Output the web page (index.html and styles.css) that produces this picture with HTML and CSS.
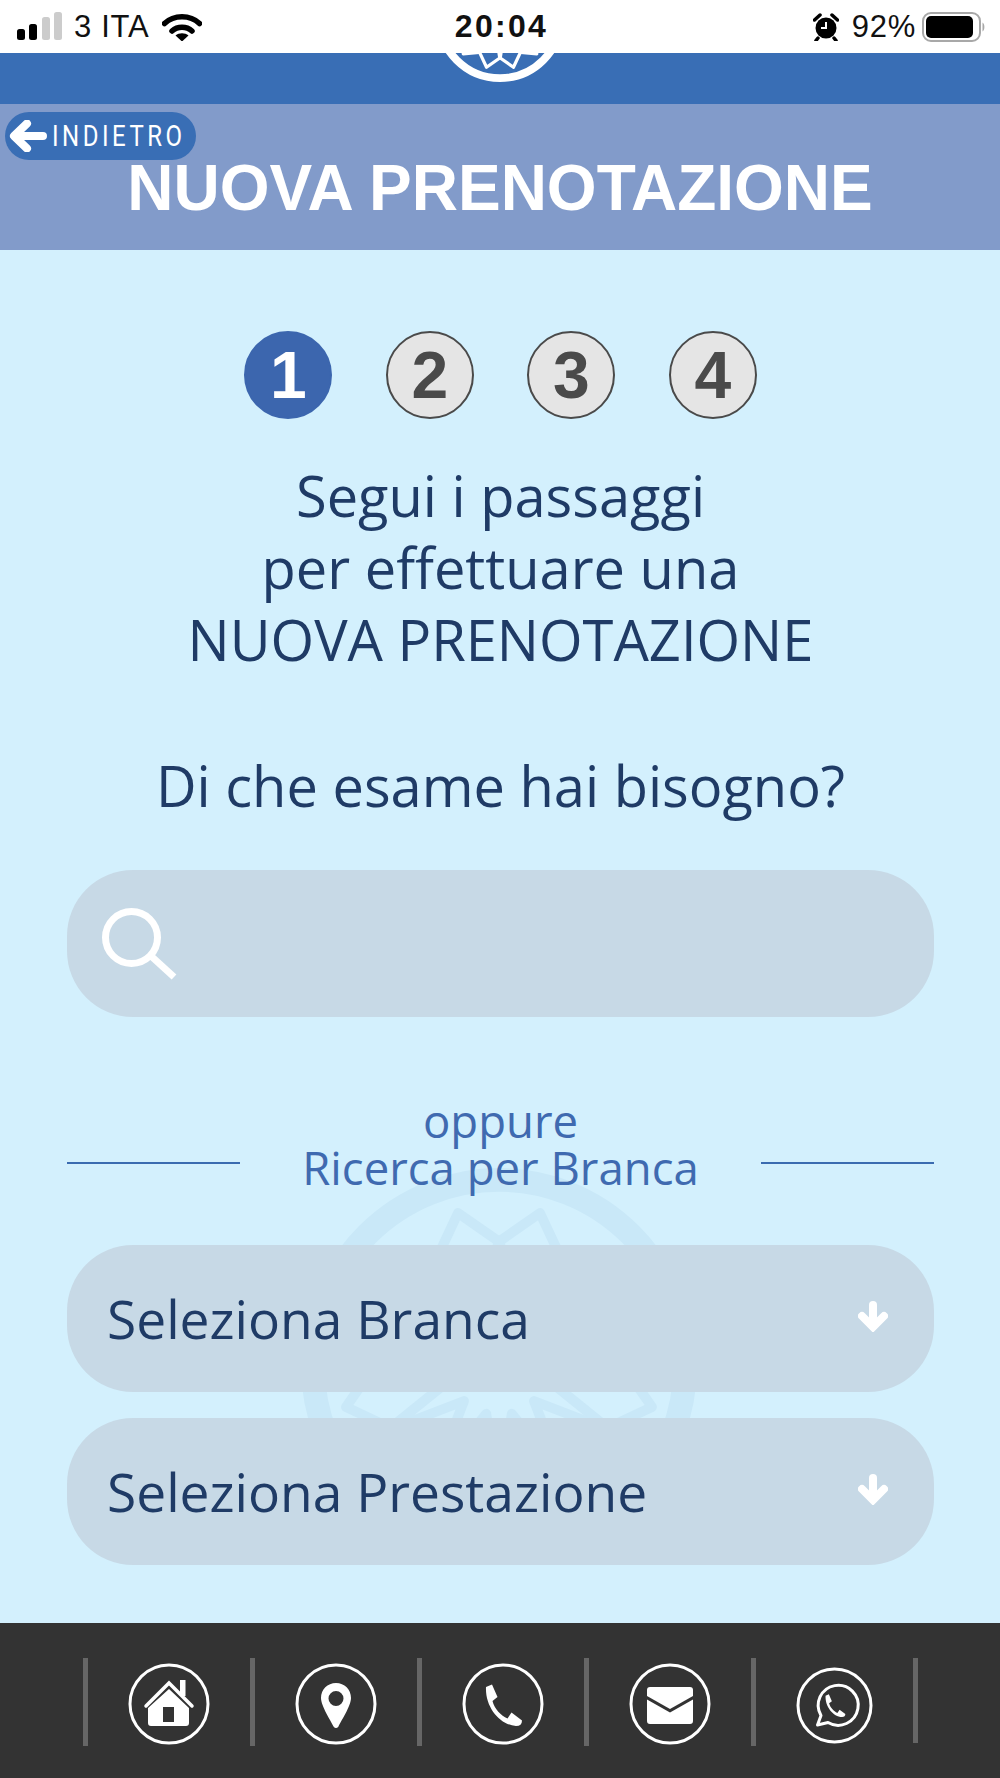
FILE: index.html
```html
<!DOCTYPE html>
<html lang="it">
<head>
<meta charset="utf-8">
<title>Nuova prenotazione</title>
<link rel="stylesheet" href="styles.css">
</head>
<body>
<svg class="defs" width="0" height="0" aria-hidden="true">
  <defs>
    <polygon id="petal" points="0,-160 32,-122 0,-50 -32,-122"/>
    <path id="handset" d="M1 3L7 0.500L12.500 13L7.500 17C9.500 25 16 31.500 22.500 34.500L26.500 28.500L37 36.500Q37 42 31 42C15 41 0 23 1 3Z"/>
    <symbol id="logo" viewBox="-200 -200 400 400">
      <circle r="188" fill="none" stroke="currentColor" stroke-width="24"/>
      <g fill="none" stroke="currentColor" stroke-width="10" stroke-linejoin="round">
        <use href="#petal" transform="rotate(15)"/>
        <use href="#petal" transform="rotate(45)"/>
        <use href="#petal" transform="rotate(75)"/>
        <use href="#petal" transform="rotate(105)"/>
        <use href="#petal" transform="rotate(135)"/>
        <use href="#petal" transform="rotate(165)"/>
        <use href="#petal" transform="rotate(195)"/>
        <use href="#petal" transform="rotate(225)"/>
        <use href="#petal" transform="rotate(255)"/>
        <use href="#petal" transform="rotate(285)"/>
        <use href="#petal" transform="rotate(315)"/>
        <use href="#petal" transform="rotate(345)"/>
      </g>
    </symbol>
    <symbol id="arrow-down" viewBox="0 0 30 31">
      <path d="M15 4V25" fill="none" stroke="currentColor" stroke-width="8" stroke-linecap="round"/>
      <path d="M4 15L15 26L26 15" fill="none" stroke="currentColor" stroke-width="8" stroke-linecap="round" stroke-linejoin="miter"/>
    </symbol>
  </defs>
</svg>
<div class="phone">
  <header class="status">
    <div class="status-left">
      <svg class="signal" viewBox="0 0 45 28" width="45" height="28">
        <rect x="0" y="17" width="8" height="11" rx="2.500" fill="#000"/>
        <rect x="12" y="12" width="8" height="16" rx="2.500" fill="#000"/>
        <rect x="25" y="5" width="8" height="23" rx="2.500" fill="#ccc"/>
        <rect x="37" y="0" width="8" height="28" rx="2.500" fill="#ccc"/>
      </svg>
      <span class="carrier">3 ITA</span>
      <svg class="wifi" viewBox="0 0 40 29" width="40" height="29">
        <path d="M2.500 11.500C12 2.500 28 2.500 37.500 11.500" fill="none" stroke="#000" stroke-width="5.500" stroke-linecap="round"/>
        <path d="M10 19C15.500 14 24.500 14 30 19" fill="none" stroke="#000" stroke-width="5.500" stroke-linecap="round"/>
        <path d="M13.500 23.500C17 20.500 23 20.500 26.500 23.500L20 29.500Z" fill="#000"/>
      </svg>
    </div>
    <div class="clock">20:04</div>
    <div class="status-right">
      <svg class="alarm" viewBox="0 0 26 28" width="26" height="28">
        <circle cx="13" cy="15" r="10.500" fill="#000"/>
        <path d="M13 9V15H8" fill="none" stroke="#fff" stroke-width="2"/>
        <path d="M1.500 7L7 2M24.500 7L19 2M5 25L3 27.500M21 25L23 27.500" stroke="#000" stroke-width="3.500" stroke-linecap="round"/>
      </svg>
      <span class="percent">92%</span>
      <svg class="battery" viewBox="0 0 64 30" width="64" height="30">
        <rect x="1" y="1" width="57" height="28" rx="8" fill="none" stroke="#a8a8a8" stroke-width="2"/>
        <rect x="4" y="4" width="47" height="22" rx="5" fill="#000"/>
        <path d="M60.500 10.500C63 11.500 63 18.500 60.500 19.500Z" fill="#a8a8a8"/>
      </svg>
    </div>
  </header>

  <div class="brand">
    <svg class="brand-logo" width="130" height="130"><use href="#logo"/></svg>
  </div>

  <div class="title-bar">
    <a class="back" href="#">
      <svg class="back-arrow" viewBox="0 0 38 32" width="38" height="32">
        <path d="M34 16H6M18 3.500L5 16L18 28.500" fill="none" stroke="#fff" stroke-width="8" stroke-linecap="round" stroke-linejoin="round"/>
      </svg>
      <span class="back-label">INDIETRO</span>
    </a>
    <h1 class="title">NUOVA PRENOTAZIONE</h1>
  </div>

  <main class="content">
    <svg class="watermark" width="396" height="396"><use href="#logo"/></svg>

    <ol class="steps">
      <li class="step step-active">1</li>
      <li class="step">2</li>
      <li class="step">3</li>
      <li class="step">4</li>
    </ol>

    <p class="intro">Segui i passaggi<br>per effettuare una<br>NUOVA PRENOTAZIONE</p>
    <p class="question">Di che esame hai bisogno?</p>

    <div class="field search">
      <svg class="search-icon" viewBox="0 0 75 75" width="75" height="75">
        <circle cx="29.500" cy="29.500" r="26" fill="none" stroke="#fff" stroke-width="7"/>
        <path d="M49 48L72 69" stroke="#fff" stroke-width="7"/>
      </svg>
    </div>

    <div class="divider">
      <span class="rule"></span>
      <p class="divider-text">oppure<br>Ricerca per Branca</p>
      <span class="rule"></span>
    </div>

    <div class="selects">
      <div class="field select">
        <span>Seleziona Branca</span>
        <svg class="select-arrow" width="30" height="31"><use href="#arrow-down"/></svg>
      </div>
      <div class="field select">
        <span>Seleziona Prestazione</span>
        <svg class="select-arrow" width="30" height="31"><use href="#arrow-down"/></svg>
      </div>
    </div>
  </main>

  <footer class="footer">
    <span class="sep"></span>
    <a class="tab" href="#">
      <svg class="ring" viewBox="0 0 82 82" width="82" height="82">
        <circle cx="41" cy="41" r="39" fill="none" stroke="#fff" stroke-width="3"/>
        <path d="M18 43L41 20L64 43" fill="none" stroke="#fff" stroke-width="3.500" stroke-linecap="round" stroke-linejoin="miter"/>
        <rect x="52" y="17" width="5.500" height="16" fill="#fff"/>
        <path fill-rule="evenodd" fill="#fff" d="M41 26L61 45V60Q61 63 58 63H23Q20 63 20 60V45ZM35 44V59H46V44Z"/>
      </svg>
    </a>
    <span class="sep"></span>
    <a class="tab" href="#">
      <svg class="ring" viewBox="0 0 82 82" width="82" height="82">
        <circle cx="41" cy="41" r="39" fill="none" stroke="#fff" stroke-width="3"/>
        <path fill-rule="evenodd" fill="#fff" d="M41 20C49.500 20 56 26.500 56 35C56 43 46 58 43.500 63.500Q41 66.500 38.500 63.500C36 58 26 43 26 35C26 26.500 32.500 20 41 20ZM41 28A7.500 7.500 0 1 0 41 43A7.500 7.500 0 1 0 41 28Z"/>
      </svg>
    </a>
    <span class="sep"></span>
    <a class="tab" href="#">
      <svg class="ring" viewBox="0 0 82 82" width="82" height="82">
        <circle cx="41" cy="41" r="39" fill="none" stroke="#fff" stroke-width="3"/>
        <use href="#handset" fill="#fff" transform="translate(23 21)"/>
      </svg>
    </a>
    <span class="sep"></span>
    <a class="tab" href="#">
      <svg class="ring" viewBox="0 0 82 82" width="82" height="82">
        <circle cx="41" cy="41" r="39" fill="none" stroke="#fff" stroke-width="3"/>
        <path fill="#fff" d="M18 33V27Q18 24 21 24H61Q64 24 64 27V33L41 46Z"/>
        <path fill="#fff" d="M18 36.500L41 49.500L64 36.500V58Q64 61 61 61H21Q18 61 18 58Z"/>
      </svg>
    </a>
    <span class="sep"></span>
    <a class="tab tab-last" href="#">
      <svg class="ring" viewBox="0 0 77 77" width="77" height="77">
        <circle cx="38.500" cy="38.500" r="36.500" fill="none" stroke="#fff" stroke-width="3"/>
        <path d="M21.500 58L25 48.500A20 20 0 1 1 32 55.500Z" fill="none" stroke="#fff" stroke-width="3" stroke-linejoin="round"/>
        <use href="#handset" fill="#fff" transform="translate(29 27) scale(0.550)"/>
      </svg>
    </a>
    <span class="sep sep-short"></span>
  </footer>
</div>
</body>
</html>
```

FILE: styles.css
```css
* {
  box-sizing: border-box;
}

html,
body {
  margin: 0;
  padding: 0;
}

.defs {
  position: absolute;
}

.phone {
  width: 1000px;
  height: 1778px;
  display: flex;
  flex-direction: column;
  overflow: hidden;
  font-family: "Open Sans", "Liberation Sans", sans-serif;
  background: #d3f0fd;
}

/* Status bar */
.status {
  height: 53px;
  flex: none;
  background: #fff;
  color: #111;
  display: grid;
  grid-template-columns: 1fr auto 1fr;
  align-items: center;
  padding: 0 14px 0 17px;
  font-family: "Liberation Sans", Arial, sans-serif;
  font-size: 31px;
  letter-spacing: 0.7px;
  position: relative;
  z-index: 2;
}

.status-left {
  display: flex;
  align-items: center;
  gap: 12px;
}

.signal {
  margin-top: -1px;
}

.wifi {
  margin-left: 1px;
}

.clock {
  font-weight: 700;
  font-size: 32px;
  letter-spacing: 2.3px;
}

.status-right {
  display: flex;
  align-items: center;
  justify-content: flex-end;
  gap: 13px;
}

.battery {
  margin-left: -7px;
}

/* Brand band */
.brand {
  height: 51px;
  flex: none;
  background: #396eb5;
  position: relative;
}

.brand-logo {
  position: absolute;
  left: 435px;
  top: -101px;
  color: #fff;
}

/* Title bar */
.title-bar {
  height: 146px;
  flex: none;
  background: #829bca;
  position: relative;
  padding-top: 48px;
}

.title {
  margin: 0;
  text-align: center;
  color: #fff;
  font-family: "Liberation Sans", Arial, sans-serif;
  font-weight: 700;
  font-size: 64px;
  line-height: 72px;
}

.back {
  position: absolute;
  left: 5px;
  top: 8px;
  width: 191px;
  height: 48px;
  border-radius: 24px;
  background: #396eb5;
  color: #fff;
  display: flex;
  align-items: center;
  gap: 5px;
  padding-left: 4px;
  text-decoration: none;
}

.back-arrow {
  flex: none;
}

.back-label {
  flex: none;
  font-family: Roboto, "Liberation Sans", sans-serif;
  font-size: 30px;
  letter-spacing: 4.400px;
  line-height: 1;
  transform: scaleX(0.8);
  transform-origin: left center;
}

/* Main */
.content {
  flex: 1;
  position: relative;
  z-index: 0;
  padding: 81px 66px 0 67px;
}

.watermark {
  position: absolute;
  left: 301px;
  top: 918px;
  z-index: -1;
  color: #c9e8f8;
}

.steps {
  list-style: none;
  margin: 0;
  padding: 0;
  display: flex;
  justify-content: center;
  gap: 53.500px;
}

.step {
  width: 88px;
  height: 88px;
  border-radius: 50%;
  border: 2px solid #4a4a4a;
  background: #e5e5e5;
  color: #4a4a4a;
  display: flex;
  align-items: center;
  justify-content: center;
  font-family: "Liberation Sans", Arial, sans-serif;
  font-weight: 700;
  font-size: 66px;
}

.step-active {
  background: #3c66ae;
  border-color: #3c66ae;
  color: #fff;
}

.intro,
.question {
  margin: 0;
  text-align: center;
  color: #1f3b66;
  font-size: 56px;
  line-height: 72px;
}

.intro {
  margin-top: 40px;
}

.question {
  margin-top: 74px;
}

.field {
  height: 147px;
  border-radius: 66px;
  background: #c7d9e6;
}

.search {
  margin-top: 49px;
  display: flex;
  align-items: center;
  padding-left: 35px;
}

.search-icon {
  margin-top: 4px;
}

.divider {
  margin-top: 80px;
  display: flex;
}

.rule {
  width: 173px;
  height: 2px;
  margin-top: 65px;
  background: #3a6bb0;
}

.divider-text {
  flex: 1;
  margin: 0;
  text-align: center;
  color: #3f6ab0;
  font-size: 45.500px;
  line-height: 47px;
}

.selects {
  margin-top: 54px;
  display: flex;
  flex-direction: column;
  gap: 26px;
}

.select {
  display: flex;
  align-items: center;
  justify-content: space-between;
  padding: 0 46px 0 40px;
  color: #1f3b66;
  font-size: 53.300px;
}

.select-arrow {
  color: #fff;
  margin-top: -4px;
}

/* Footer */
.footer {
  height: 155px;
  flex: none;
  background: #333;
  display: flex;
  align-items: flex-start;
  padding: 35px 0 0 83px;
}

.sep {
  width: 5px;
  height: 88px;
  flex: none;
  background: #666;
}

.sep-short {
  height: 85px;
}

.tab {
  width: 162px;
  flex: none;
  display: flex;
  justify-content: center;
  padding-top: 5px;
}

.tab-last {
  width: 157px;
  padding-top: 9px;
}
```
